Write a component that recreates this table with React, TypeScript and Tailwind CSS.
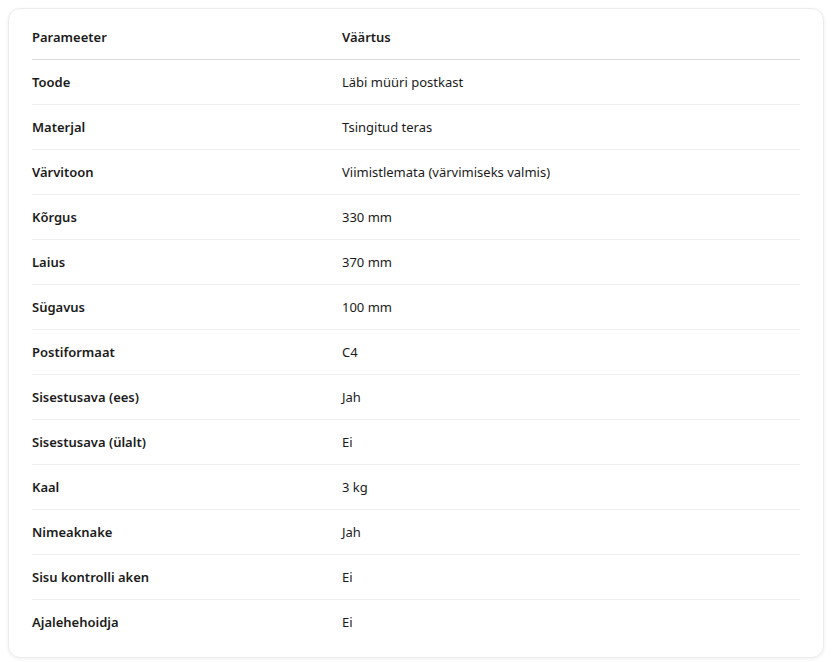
const rows: [string, string][] = [
  ["Toode", "Läbi müüri postkast"],
  ["Materjal", "Tsingitud teras"],
  ["Värvitoon", "Viimistlemata (värvimiseks valmis)"],
  ["Kõrgus", "330 mm"],
  ["Laius", "370 mm"],
  ["Sügavus", "100 mm"],
  ["Postiformaat", "C4"],
  ["Sisestusava (ees)", "Jah"],
  ["Sisestusava (ülalt)", "Ei"],
  ["Kaal", "3 kg"],
  ["Nimeaknake", "Jah"],
  ["Sisu kontrolli aken", "Ei"],
  ["Ajalehehoidja", "Ei"],
]

export default function App() {
  return (
    <div className="min-h-screen bg-white p-2 font-['Noto_Sans',sans-serif] text-[#1b1b1b]">
      <div className="rounded-xl border border-[#ececec] bg-white px-[23px] pt-[5px] pb-[13px] shadow-[0_1px_4px_rgba(0,0,0,0.06)]">
        <table className="w-full border-collapse text-[13px]">
          <thead>
            <tr className="border-b border-[#dcdcdc]">
              <th className="h-[45px] w-[310px] p-0 pt-[2px] text-left font-semibold">Parameeter</th>
              <th className="h-[45px] p-0 pt-[2px] text-left font-semibold">Väärtus</th>
            </tr>
          </thead>
          <tbody>
            {rows.map(([k, v], i) => (
              <tr
                key={k}
                className={i < rows.length - 1 ? "border-b border-[#efefef]" : ""}
              >
                <td className="h-[45px] p-0 pt-[2px] font-semibold">{k}</td>
                <td className="h-[45px] p-0 pt-[2px]">{v}</td>
              </tr>
            ))}
          </tbody>
        </table>
      </div>
    </div>
  )
}
